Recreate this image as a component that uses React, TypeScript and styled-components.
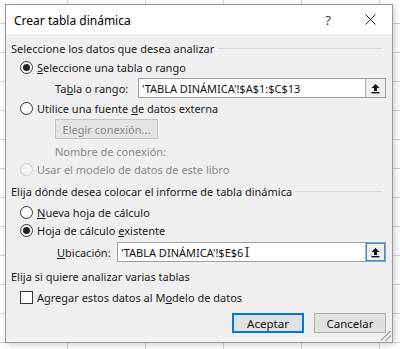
import styled, { createGlobalStyle } from 'styled-components';

const GlobalStyle = createGlobalStyle`
  html, body {
    margin: 0;
    padding: 0;
  }
  body {
    width: 400px;
    height: 349px;
    overflow: hidden;
    background-color: #ffffff;
    background-image:
      linear-gradient(to right, #d4d4d4 1px, transparent 1px),
      linear-gradient(to bottom, #d4d4d4 1px, transparent 1px);
    background-size: 78px 29px;
    background-position: -11px 23px;
    font-family: "Noto Sans", "Open Sans", sans-serif;
    font-size: 11px;
    color: #1b1b1b;
  }
`;

function UploadIcon() {
  return (
    <svg width="11" height="11" viewBox="0 0 11 11">
      <path d="M5.5 1 L9.5 5 L7 5 L7 8 L4 8 L4 5 L1.5 5 Z" fill="#111" />
      <rect x="1.5" y="9" width="8" height="1.4" fill="#111" />
    </svg>
  );
}

function CloseIcon() {
  return (
    <svg width="11" height="11" viewBox="0 0 11 11">
      <path d="M0.5 0.5 L10.5 10.5 M10.5 0.5 L0.5 10.5" stroke="#222" strokeWidth="1" />
    </svg>
  );
}

export default function App() {
  return (
    <>
      <GlobalStyle />
      <Dialog>
        <TitleBar>
          <Title>Crear tabla dinámica</Title>
          <TitleButtons>
            <Help>?</Help>
            <CloseIcon />
          </TitleButtons>
        </TitleBar>

        <Body>
          <Section $mt={6} $line>
            Seleccione los datos que desea analizar
          </Section>

          <Row $h={18} $mt={2}>
            <Radio $checked />
            <span>
              <u>S</u>eleccione una tabla o rango
            </span>
          </Row>

          <FieldRow $mt={2} $indent={44} $label={83}>
            <span>
              Ta<u>b</u>la o rango:
            </span>
            <Input>
              <InputText>'TABLA DINÁMICA'!$A$1:$C$13</InputText>
              <RefButton>
                <UploadIcon />
              </RefButton>
            </Input>
          </FieldRow>

          <Row $h={18} $mt={1}>
            <Radio />
            <span>
              Utilice una fuente <u>d</u>e datos externa
            </span>
          </Row>

          <Row $h={20} $mt={2} $indent={44}>
            <DisabledButton>Elegir conexión...</DisabledButton>
          </Row>

          <Row $h={16} $mt={4} $indent={44} $disabled>
            Nombre de conexión:
          </Row>

          <Row $h={18} $mt={1} $disabled>
            <Radio $disabled />
            <span>Usar el modelo de datos de este libro</span>
          </Row>

          <Section $mt={5} $line>
            Elija dónde desea colocar el informe de tabla dinámica
          </Section>

          <Row $h={18} $mt={4}>
            <Radio />
            <span>
              <u>N</u>ueva hoja de cálculo
            </span>
          </Row>

          <Row $h={18}>
            <Radio $checked />
            <span>
              Hoja de cálculo <u>e</u>xistente
            </span>
          </Row>

          <FieldRow $mt={3} $indent={46} $label={60}>
            <span>
              <u>U</u>bicación:
            </span>
            <Input>
              <InputText>
                'TABLA DINÁMICA'!$E$6
                <Caret>I</Caret>
              </InputText>
              <RefButton $focused>
                <UploadIcon />
              </RefButton>
            </Input>
          </FieldRow>

          <Section $mt={6}>Elija si quiere analizar varias tablas</Section>

          <Row $h={18} $mt={4}>
            <Checkbox />
            <span>
              Agregar estos datos al M<u>o</u>delo de datos
            </span>
          </Row>

          <Footer>
            <Button $primary>Aceptar</Button>
            <Button>Cancelar</Button>
          </Footer>
        </Body>
        <Grip />
      </Dialog>
    </>
  );
}

const Dialog = styled.div`
  position: relative;
  margin: 4px 0 0 5px;
  width: 386px;
  height: 337px;
  border: 1px solid #9a9a9a;
  background: #f0f0f0;
  box-shadow: 2px 2px 6px rgba(0, 0, 0, 0.18);
  display: flex;
  flex-direction: column;
`;

const TitleBar = styled.div`
  height: 29px;
  background: #ffffff;
  display: flex;
  align-items: center;
  padding: 0 16px 0 8px;
`;

const Title = styled.div`
  font-size: 12px;
  color: #000;
  margin-right: auto;
  padding-top: 1px;
`;

const TitleButtons = styled.div`
  display: flex;
  align-items: center;
  gap: 34px;
`;

const Help = styled.span`
  font-size: 13px;
  color: #333;
`;

const Body = styled.div`
  display: flex;
  flex-direction: column;
  padding: 0 6px 0 5px;

  u {
    text-underline-offset: 1px;
  }
`;

const Section = styled.div<{ $mt: number; $line?: boolean }>`
  height: 16px;
  margin-top: ${({ $mt }) => $mt}px;
  display: flex;
  align-items: center;
  gap: 4px;
  white-space: nowrap;

  &::after {
    content: '';
    display: ${({ $line }) => ($line ? 'block' : 'none')};
    flex: 1;
    height: 1px;
    background: #dcdcdc;
    margin-right: 4px;
  }
`;

const Row = styled.div<{ $h: number; $mt?: number; $indent?: number; $disabled?: boolean }>`
  height: ${({ $h }) => $h}px;
  margin-top: ${({ $mt = 0 }) => $mt}px;
  padding-left: ${({ $indent = 9 }) => $indent}px;
  display: flex;
  align-items: center;
  gap: 4px;
  white-space: nowrap;
  color: ${({ $disabled }) => ($disabled ? '#8a8a8a' : 'inherit')};
`;

const FieldRow = styled.div<{ $mt: number; $indent: number; $label: number }>`
  height: 20px;
  margin-top: ${({ $mt }) => $mt}px;
  padding-left: ${({ $indent }) => $indent}px;
  display: grid;
  grid-template-columns: ${({ $label }) => $label}px minmax(0, 1fr);
  align-items: center;
  white-space: nowrap;
`;

const Input = styled.div`
  height: 18px;
  display: flex;
  border: 1px solid #9e9e9e;
  background: #ffffff;
`;

const InputText = styled.div`
  flex: 1;
  display: flex;
  align-items: center;
  padding-left: 3px;
  color: #111;
  overflow: hidden;
`;

const Caret = styled.span`
  font-family: "DejaVu Serif", serif;
  font-size: 13px;
  color: #333;
  margin-left: 1px;
`;

const RefButton = styled.div<{ $focused?: boolean }>`
  width: 19px;
  display: flex;
  align-items: center;
  justify-content: center;
  background: #f0f0f0;
  border-left: 1px solid #b4b4b4;
  box-shadow: ${({ $focused }) => ($focused ? 'inset 0 0 0 1px #3c8fd6' : 'none')};
`;

const Radio = styled.span<{ $checked?: boolean; $disabled?: boolean }>`
  width: 11px;
  height: 11px;
  border-radius: 50%;
  border: 1px solid ${({ $disabled }) => ($disabled ? '#cfcfcf' : '#333')};
  background: ${({ $disabled }) => ($disabled ? '#f4f4f4' : '#fff')};
  display: flex;
  align-items: center;
  justify-content: center;
  flex-shrink: 0;

  &::after {
    content: '';
    display: ${({ $checked }) => ($checked ? 'block' : 'none')};
    width: 7px;
    height: 7px;
    border-radius: 50%;
    background: #222;
  }
`;

const Checkbox = styled.span`
  width: 11px;
  height: 11px;
  border: 1px solid #333;
  background: #fff;
  flex-shrink: 0;
`;

const DisabledButton = styled.div`
  width: 101px;
  height: 18px;
  border: 1px solid #c4c4c4;
  background: #e4e4e4;
  color: #8a8a8a;
  display: flex;
  align-items: center;
  justify-content: center;
`;

const Footer = styled.div`
  margin-top: 7px;
  display: flex;
  justify-content: flex-end;
  gap: 10px;
`;

const Button = styled.div<{ $primary?: boolean }>`
  width: 70px;
  height: 18px;
  display: flex;
  align-items: center;
  justify-content: center;
  background: #e1e1e1;
  border: 1px solid ${({ $primary }) => ($primary ? '#0078d7' : '#adadad')};
  box-shadow: ${({ $primary }) => ($primary ? 'inset 0 0 0 1px #0078d7' : 'none')};
  color: #111;
  font-size: 11.5px;
`;

const Grip = styled.div`
  position: absolute;
  right: 1px;
  bottom: 1px;
  width: 10px;
  height: 10px;
  background: linear-gradient(
    135deg,
    transparent 45%,
    #a8a8a8 45%,
    #a8a8a8 52%,
    transparent 52%,
    transparent 70%,
    #a8a8a8 70%,
    #a8a8a8 77%,
    transparent 77%
  );
`;
